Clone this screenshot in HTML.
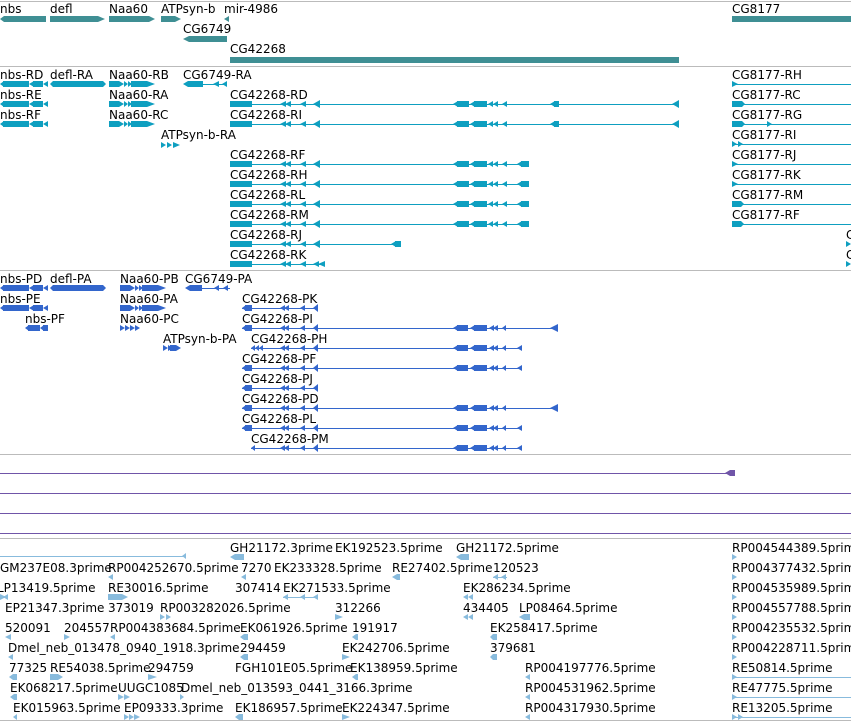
<!DOCTYPE html>
<html><head><meta charset="utf-8"><style>
html,body{margin:0;padding:0;background:#fff;width:851px;height:722px;overflow:hidden}
svg{display:block}
text{font-family:"DejaVu Sans","Liberation Sans",sans-serif;font-size:12px;fill:#000}
</style></head><body>
<svg width="851" height="722" xmlns="http://www.w3.org/2000/svg">
<defs>
<g id="cgHead">
<rect x="230" y="-3" width="22" height="6"/>
<polygon points="280,0 286,-3 286,3"/><polygon points="285,0 291,-3 291,3"/>
<polygon points="300,0 306,-3 306,3"/>
<polygon points="313,0 320,-4 320,4"/>
<polygon points="453,0 458,-3 458,3"/><rect x="457" y="-3" width="12" height="6"/>
<polygon points="470,0 475,-3 475,3"/><rect x="474" y="-3" width="13" height="6"/>
<polygon points="488,0 493,-3 493,3"/><polygon points="493,0 498,-3 498,3"/>
<polygon points="502,0 507,-3 507,3"/>
</g>
<g id="cgL"><use href="#cgHead"/><rect x="230" y="0" width="449" height="1"/>
<polygon points="550,0 555,-3 555,3"/><rect x="554" y="-3" width="5" height="6"/>
<polygon points="672,0 679,-4 679,4"/></g>
<g id="cgS"><use href="#cgHead"/><rect x="230" y="0" width="299" height="1"/>
<polygon points="517,0 522,-3 522,3"/><rect x="521" y="-3" width="8" height="6"/></g>
<g id="pHead">
<polygon points="242,0 246,-3 246,3"/><rect x="245" y="-3" width="7" height="6"/>
<polygon points="280,0 285,-3 285,3"/><polygon points="284,0 289,-3 289,3"/>
<polygon points="300,0 305,-3 305,3"/>
<polygon points="313,0 318,-4 318,4"/>
</g>
<g id="pMid">
<polygon points="453,0 458,-3 458,3"/><rect x="457" y="-3" width="11" height="6"/>
<polygon points="470,0 475,-3 475,3"/><rect x="474" y="-3" width="13" height="6"/>
<polygon points="489,0 494,-3 494,3"/><polygon points="493,0 498,-3 498,3"/>
<polygon points="502,0 506,-3 506,3"/>
</g>
<g id="pL"><use href="#pHead"/><use href="#pMid"/><rect x="242" y="0" width="316" height="1"/>
<polygon points="550,0 558,-4 558,4"/></g>
<g id="pS"><use href="#pHead"/><use href="#pMid"/><rect x="242" y="0" width="280" height="1"/>
<polygon points="517,0 522,-3 522,3"/></g>
<g id="pK"><use href="#pHead"/><rect x="242" y="0" width="76" height="1"/></g>
<g id="nbsT"><polygon points="0,0 4,-3 4,3"/><rect x="3" y="-3" width="26" height="6"/><polygon points="29,0 34,-3 34,3"/><rect x="33" y="-3" width="10" height="6"/><polygon points="43,0 48,-3 48,3"/></g>
<g id="naaT"><rect x="109" y="-3" width="10" height="6"/><polygon points="119,-3 124,0 119,3"/><polygon points="124,-3 128,0 124,3"/><polygon points="128,-3 132,0 128,3"/><rect x="131" y="-3" width="16" height="6"/><polygon points="147,-3 155,0 147,3"/></g>
</defs>

<!-- separators -->
<rect x="0" y="1" width="851" height="1" fill="#bbb"/>
<rect x="0" y="66" width="851" height="1" fill="#bbb"/>
<rect x="0" y="270" width="851" height="1" fill="#bbb"/>
<rect x="0" y="454" width="851" height="1" fill="#bbb"/>
<rect x="0" y="538" width="851" height="1" fill="#bbb"/>
<rect x="0" y="720" width="851" height="1" fill="#bbb"/>

<!-- genes -->
<g fill="#3f8f94">
<polygon points="0,19 4,16 46,16 46,22 4,22"/>
<polygon points="50,16 98,16 105,19 98,22 50,22"/>
<polygon points="109,16 149,16 155,19 149,22 109,22"/>
<polygon points="161,16 175,16 181,19 175,22 161,22"/>
<polygon points="224,19 229,16 229,22"/>
<polygon points="183,39 189,36 227,36 227,42 189,42"/>
<rect x="230" y="57" width="449" height="6"/>
<rect x="732" y="16" width="119" height="6"/>
</g>
<text x="0" y="13">nbs</text><text x="50" y="13">defl</text><text x="109" y="13">Naa60</text>
<text x="161" y="13">ATPsyn-b</text><text x="224" y="13">mir-4986</text><text x="732" y="13">CG8177</text>
<text x="183" y="33">CG6749</text><text x="230" y="53">CG42268</text>

<!-- transcripts -->
<g fill="#0e9fc0">
<use href="#nbsT" y="84"/><use href="#nbsT" y="104"/><use href="#nbsT" y="124"/>
<polygon points="50,84 53,81 103,81 106,84 103,87 53,87"/>
<use href="#naaT" y="84"/><use href="#naaT" y="104"/><use href="#naaT" y="124" transform="translate(0,0)"/>
<polygon points="183,84 188,81 203,81 203,87 188,87"/><rect x="203" y="84" width="24" height="1"/>
<polygon points="213,84 219,81 219,87"/><polygon points="222,84 227,81 227,87"/>
<polygon points="161,142 166,145 161,148"/><polygon points="167,142 172,145 167,148"/><polygon points="173,142 180,145 173,148"/>
<use href="#cgL" y="104"/><use href="#cgL" y="124"/>
<use href="#cgS" y="164"/><use href="#cgS" y="184"/><use href="#cgS" y="204"/><use href="#cgS" y="224"/>
<g transform="translate(0,244)"><rect x="230" y="-3" width="22" height="6"/><polygon points="280,0 286,-3 286,3"/><polygon points="285,0 291,-3 291,3"/><polygon points="300,0 306,-3 306,3"/><polygon points="313,0 320,-4 320,4"/><rect x="230" y="0" width="170" height="1"/><polygon points="391,0 396,-3 396,3"/><rect x="395" y="-3" width="6" height="6"/></g>
<g transform="translate(0,264)"><rect x="230" y="-3" width="22" height="6"/><rect x="230" y="0" width="95" height="1"/><polygon points="280,0 286,-3 286,3"/><polygon points="285,0 291,-3 291,3"/><polygon points="300,0 306,-3 306,3"/><polygon points="313,0 319,-3 319,3"/><polygon points="318,0 325,-3 325,3"/></g>
<!-- CG8177 -->
<rect x="732" y="84" width="119" height="1"/><polygon points="732,81 738,84 732,87"/>
<rect x="732" y="104" width="119" height="1"/><polygon points="732,101 742,101 745,104 742,107 732,107"/>
<rect x="732" y="124" width="119" height="1"/><polygon points="732,121 742,121 745,124 742,127 732,127"/><polygon points="767,121 772,124 767,127"/>
<rect x="732" y="144" width="119" height="1"/><polygon points="732,141 737,144 732,147"/><polygon points="738,141 743,144 738,147"/>
<rect x="732" y="164" width="119" height="1"/><polygon points="732,161 738,164 732,167"/>
<rect x="732" y="184" width="119" height="1"/><polygon points="732,181 738,184 732,187"/>
<rect x="732" y="204" width="119" height="1"/><polygon points="732,201 741,201 744,204 741,207 732,207"/>
<rect x="732" y="224" width="119" height="1"/><polygon points="732,221 741,221 744,224 741,227 732,227"/>
<polygon points="846,241 851,244 846,247"/><polygon points="846,261 851,264 846,267"/>
</g>
<text x="0" y="79">nbs-RD</text><text x="50" y="79">defl-RA</text><text x="109" y="79">Naa60-RB</text><text x="183" y="79">CG6749-RA</text><text x="732" y="79">CG8177-RH</text>
<text x="0" y="99">nbs-RE</text><text x="109" y="99">Naa60-RA</text><text x="230" y="99">CG42268-RD</text><text x="732" y="99">CG8177-RC</text>
<text x="0" y="119">nbs-RF</text><text x="109" y="119">Naa60-RC</text><text x="230" y="119">CG42268-RI</text><text x="732" y="119">CG8177-RG</text>
<text x="161" y="139">ATPsyn-b-RA</text><text x="732" y="139">CG8177-RI</text>
<text x="230" y="159">CG42268-RF</text><text x="732" y="159">CG8177-RJ</text>
<text x="230" y="179">CG42268-RH</text><text x="732" y="179">CG8177-RK</text>
<text x="230" y="199">CG42268-RL</text><text x="732" y="199">CG8177-RM</text>
<text x="230" y="219">CG42268-RM</text><text x="732" y="219">CG8177-RF</text>
<text x="230" y="239">CG42268-RJ</text><text x="846" y="239">C</text>
<text x="230" y="259">CG42268-RK</text><text x="846" y="259">C</text>

<!-- proteins -->
<g fill="#3366cc">
<use href="#nbsT" y="288"/><use href="#nbsT" y="308"/>
<g transform="translate(25,0)"><polygon points="0,328 4,325 4,331"/><rect x="3" y="325" width="12" height="6"/><polygon points="15,328 19,325 19,331"/><rect x="18" y="325" width="5" height="6"/></g>
<polygon points="50,288 53,285 103,285 106,288 103,291 53,291"/>
<g transform="translate(11,204)"><use href="#naaT" y="84"/></g>
<g transform="translate(11,224)"><use href="#naaT" y="84"/></g>
<g transform="translate(11,244)"><polygon points="109,81 114,84 109,87"/><polygon points="114,81 119,84 114,87"/><polygon points="119,81 124,84 119,87"/><polygon points="124,81 129,84 124,87"/></g>
<polygon points="185,288 190,285 202,285 202,291 190,291"/><rect x="202" y="288" width="28" height="1"/><polygon points="214,288 219,285 219,291"/><polygon points="223,288 228,285 228,291"/>
<polygon points="163,345 168,348 163,351"/><polygon points="168,345 173,348 168,351"/><rect x="170" y="345" width="6" height="6"/><polygon points="176,345 181,348 176,351"/>
<use href="#pK" y="308"/><use href="#pL" y="328"/>
<g transform="translate(0,348)"><rect x="251" y="0" width="271" height="1"/><polygon points="251,0 255,-3 255,3"/><polygon points="255,0 259,-3 259,3"/><polygon points="259,0 263,-3 263,3"/><polygon points="280,0 285,-3 285,3"/><polygon points="284,0 289,-3 289,3"/><polygon points="300,0 305,-3 305,3"/><polygon points="313,0 318,-4 318,4"/><use href="#pMid"/><polygon points="517,0 522,-3 522,3"/></g>
<use href="#pS" y="368"/><use href="#pK" y="388"/><use href="#pL" y="408"/><use href="#pS" y="428"/>
<g transform="translate(0,448)"><rect x="251" y="0" width="271" height="1"/><polygon points="251,0 255,-3 255,3"/><polygon points="280,0 285,-3 285,3"/><polygon points="284,0 289,-3 289,3"/><polygon points="300,0 305,-3 305,3"/><polygon points="313,0 318,-4 318,4"/><use href="#pMid"/><polygon points="517,0 522,-3 522,3"/></g>
</g>
<text x="0" y="283">nbs-PD</text><text x="50" y="283">defl-PA</text><text x="120" y="283">Naa60-PB</text><text x="185" y="283">CG6749-PA</text>
<text x="0" y="303">nbs-PE</text><text x="120" y="303">Naa60-PA</text><text x="242" y="303">CG42268-PK</text>
<text x="25" y="323">nbs-PF</text><text x="120" y="323">Naa60-PC</text><text x="242" y="323">CG42268-PI</text>
<text x="163" y="343">ATPsyn-b-PA</text><text x="251" y="343">CG42268-PH</text>
<text x="242" y="363">CG42268-PF</text>
<text x="242" y="383">CG42268-PJ</text>
<text x="242" y="403">CG42268-PD</text>
<text x="242" y="423">CG42268-PL</text>
<text x="251" y="443">CG42268-PM</text>

<!-- purple -->
<g fill="#7055a8">
<rect x="0" y="473" width="735" height="1"/><polygon points="725,473 730,470 735,470 735,476 730,476"/>
<rect x="0" y="493" width="851" height="1"/>
<rect x="0" y="513" width="851" height="1"/>
<rect x="0" y="533" width="851" height="1"/>
</g>

<!-- bottom ESTs -->
<g fill="#88bbdd">
<rect x="0" y="556" width="185" height="1"/><polygon points="182,556 186,553 186,559"/>
<polygon points="230,557 235,554 244,554 244,560 235,560"/><polygon points="456,557 461,554 469,554 469,560 461,560"/>
<polygon points="108,577 113,574 113,580"/><polygon points="241,577 246,574 246,580"/><polygon points="392,577 397,574 400,574 400,580 397,580"/><rect x="493" y="577" width="14" height="1"/><polygon points="493,577 498,574 498,580"/><polygon points="501,577 506,574 506,580"/>
<polygon points="0,594 6,597 0,600"/><polygon points="3,597 8,594 8,600"/><rect x="108" y="594" width="14" height="6"/><polygon points="122,594 128,597 122,600"/><rect x="283" y="597" width="35" height="1"/><polygon points="283,597 288,594 288,600"/><polygon points="300,597 305,594 305,600"/><polygon points="313,597 318,594 318,600"/><polygon points="463,597 468,594 468,600"/><polygon points="468,597 473,594 473,600"/>
<polygon points="160,614 165,617 160,620"/><polygon points="166,614 171,617 166,620"/><polygon points="335,614 343,617 335,620"/><polygon points="463,617 468,614 468,620"/><polygon points="468,617 473,614 473,620"/><polygon points="519,617 524,614 530,614 530,620 524,620"/>
<polygon points="5,637 11,634 11,640"/><polygon points="64,634 70,637 64,640"/><polygon points="110,637 115,634 115,640"/><polygon points="240,637 244,634 248,634 248,640 244,640"/><polygon points="352,637 356,634 358,634 358,640 356,640"/><polygon points="490,637 493,634 497,634 497,640 493,640"/>
<polygon points="8,657 13,654 13,660"/><polygon points="240,657 244,654 248,654 248,660 244,660"/><polygon points="342,654 350,657 342,660"/><polygon points="490,657 493,654 497,654 497,660 493,660"/>
<polygon points="9,677 13,674 17,674 17,680 13,680"/><rect x="50" y="674" width="8" height="6"/><polygon points="58,674 63,677 58,680"/><polygon points="148,674 157,677 148,680"/><polygon points="352,677 356,674 358,674 358,680 356,680"/><polygon points="525,677 530,674 530,680"/>
<polygon points="10,697 14,694 17,694 17,700 14,700"/><polygon points="118,694 124,697 118,700"/><polygon points="124,694 130,697 124,700"/><polygon points="180,694 184,697 180,700"/><polygon points="525,697 530,694 530,700"/>
<polygon points="13,717 17,714 17,720"/><polygon points="124,714 129,717 124,720"/><polygon points="129,714 134,717 129,720"/><polygon points="134,714 140,717 134,720"/><polygon points="235,717 239,714 243,714 243,720 239,720"/><polygon points="342,714 350,717 342,720"/><polygon points="525,717 530,714 530,720"/>
<polygon points="732,554 737,557 732,560"/><polygon points="732,574 737,577 732,580"/><polygon points="732,594 737,597 732,600"/><polygon points="732,614 737,617 732,620"/><polygon points="732,634 737,637 732,640"/><polygon points="732,654 737,657 732,660"/>
<rect x="732" y="677" width="119" height="1"/><polygon points="732,674 737,677 732,680"/>
<rect x="732" y="697" width="119" height="1"/><polygon points="732,694 737,697 732,700"/>
<rect x="732" y="717" width="119" height="1"/><polygon points="732,714 737,717 732,720"/><polygon points="738,714 743,717 738,720"/>
</g>
<text x="230" y="552">GH21172.3prime</text><text x="335" y="552">EK192523.5prime</text><text x="456" y="552">GH21172.5prime</text><text x="732" y="552">RP004544389.5prime</text>
<text x="0" y="572">GM237E08.3prime</text><text x="108" y="572">RP004252670.5prime</text><text x="241" y="572">7270</text><text x="274" y="572">EK233328.5prime</text><text x="392" y="572">RE27402.5prime</text><text x="493" y="572">120523</text><text x="732" y="572">RP004377432.5prime</text>
<text x="-3" y="592">LP13419.5prime</text><text x="108" y="592">RE30016.5prime</text><text x="235" y="592">307414</text><text x="283" y="592">EK271533.5prime</text><text x="463" y="592">EK286234.5prime</text><text x="732" y="592">RP004535989.5prime</text>
<text x="5" y="612">EP21347.3prime</text><text x="108" y="612">373019</text><text x="160" y="612">RP003282026.5prime</text><text x="335" y="612">312266</text><text x="463" y="612">434405</text><text x="519" y="612">LP08464.5prime</text><text x="732" y="612">RP004557788.5prime</text>
<text x="5" y="632">520091</text><text x="64" y="632">204557</text><text x="110" y="632">RP004383684.5prime</text><text x="240" y="632">EK061926.5prime</text><text x="352" y="632">191917</text><text x="490" y="632">EK258417.5prime</text><text x="732" y="632">RP004235532.5prime</text>
<text x="8" y="652">Dmel_neb_013478_0940_1918.3prime</text><text x="240" y="652">294459</text><text x="342" y="652">EK242706.5prime</text><text x="490" y="652">379681</text><text x="732" y="652">RP004228711.5prime</text>
<text x="9" y="672">77325</text><text x="50" y="672">RE54038.5prime</text><text x="148" y="672">294759</text><text x="235" y="672">FGH101E05.5prime</text><text x="350" y="672">EK138959.5prime</text><text x="525" y="672">RP004197776.5prime</text><text x="732" y="672">RE50814.5prime</text>
<text x="10" y="692">EK068217.5prime</text><text x="118" y="692">UUGC1085</text><text x="181" y="692">Dmel_neb_013593_0441_3166.3prime</text><text x="525" y="692">RP004531962.5prime</text><text x="732" y="692">RE47775.5prime</text>
<text x="13" y="712">EK015963.5prime</text><text x="124" y="712">EP09333.3prime</text><text x="235" y="712">EK186957.5prime</text><text x="342" y="712">EK224347.5prime</text><text x="525" y="712">RP004317930.5prime</text><text x="732" y="712">RE13205.5prime</text>
</svg>
</body></html>
